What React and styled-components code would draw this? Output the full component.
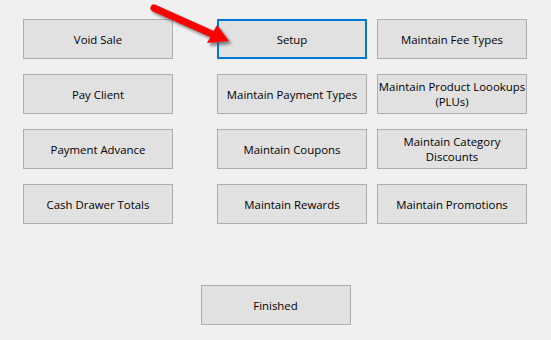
import React from "react";
import styled, { createGlobalStyle } from "styled-components";

const GlobalStyle = createGlobalStyle`
  html, body {
    margin: 0;
    padding: 0;
    background: #f0f0f0;
  }
  body {
    font-family: "Segoe UI", "Open Sans", "Noto Sans", sans-serif;
  }
`;

const Page = styled.div`
  position: relative;
  width: 551px;
  height: 340px;
  box-sizing: border-box;
  padding: 19px 0 0 23px;
  background: #f0f0f0;
  display: flex;
  flex-direction: column;
`;

const Grid = styled.div`
  display: grid;
  grid-template-columns: 184px 150px 150px;
  grid-auto-rows: 40px;
  column-gap: 10px;
  row-gap: 15px;
`;

const Button = styled.button`
  width: 150px;
  height: 40px;
  box-sizing: border-box;
  margin: 0;
  padding: 0;
  display: flex;
  flex-direction: column;
  align-items: center;
  justify-content: center;
  background: #e1e1e1;
  border: ${({ $focused }) => ($focused ? "2px solid #0078d7" : "1px solid #adadad")};
  font-family: inherit;
  font-size: 11.4px;
  line-height: 15px;
  color: #000;
  white-space: nowrap;
  cursor: pointer;
`;

const Line = styled.span`
  display: block;
`;

const Footer = styled.div`
  display: flex;
  justify-content: center;
  margin-top: 61px;
  margin-left: -23px;
`;

const Arrow = styled.svg`
  position: absolute;
  left: 140px;
  top: 0;
  overflow: visible;
  pointer-events: none;
`;

const buttons = [
  ["Void Sale"],
  ["Setup"],
  ["Maintain Fee Types"],
  ["Pay Client"],
  ["Maintain Payment Types"],
  ["Maintain Product Loookups", "(PLUs)"],
  ["Payment Advance"],
  ["Maintain Coupons"],
  ["Maintain Category", "Discounts"],
  ["Cash Drawer Totals"],
  ["Maintain Rewards"],
  ["Maintain Promotions"],
];

const PointerArrow = () => (
  <Arrow width="100" height="50" viewBox="0 0 100 50">
    <defs>
      <filter id="shadow" x="-20%" y="-20%" width="140%" height="160%">
        <feGaussianBlur stdDeviation="1.5" />
      </filter>
    </defs>
    <g transform="translate(2 2.5)" fill="#555" stroke="#555" opacity="0.7" filter="url(#shadow)">
      <line x1="14" y1="8" x2="72" y2="34" strokeWidth="7" strokeLinecap="round" />
      <polygon points="68,43 77,25 89,41" strokeWidth="1" />
    </g>
    <line x1="14" y1="8" x2="72" y2="34" stroke="#f00" strokeWidth="7" strokeLinecap="round" />
    <polygon points="67,43 77,25 89,41" fill="#f00" />
  </Arrow>
);

const App = () => {
  return (
    <Page>
      <GlobalStyle />
      <Grid>
        {buttons.map((lines) => (
          <Button key={lines[0]} $focused={lines[0] === "Setup"}>
            {lines.map((line) => (
              <Line key={line}>{line}</Line>
            ))}
          </Button>
        ))}
      </Grid>
      <Footer>
        <Button>
          <Line>Finished</Line>
        </Button>
      </Footer>
      <PointerArrow />
    </Page>
  );
};

export default App;
